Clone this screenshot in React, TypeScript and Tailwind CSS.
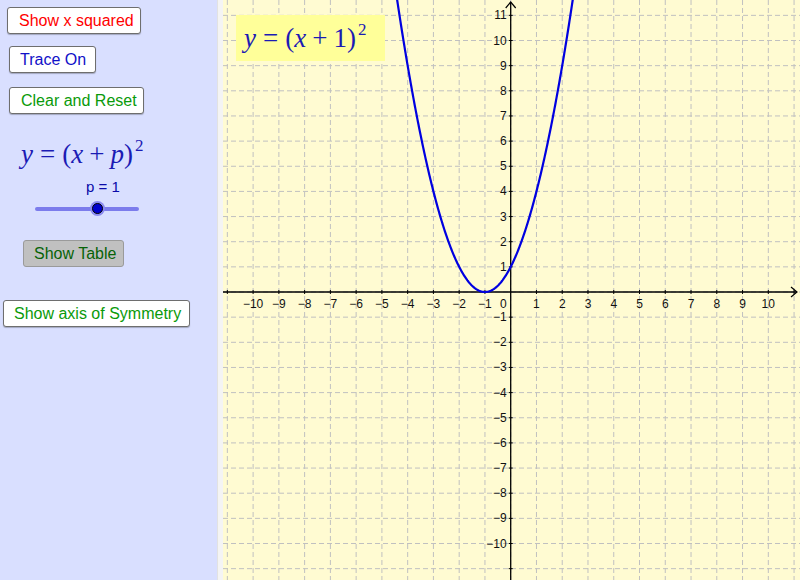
import React from 'react';

const OX = 287.7;
const OY = 292;
const UX = 25.76;
const UY = 25.15;
const GRID = Array.from({ length: 23 }, (_, i) => i - 11);

const px = (x: number) => OX + x * UX;
const py = (y: number) => OY - y * UY;

function parabola() {
  const pts: string[] = [];
  for (let x = -4.6; x <= 2.6; x += 0.02) {
    const y = (x + 1) * (x + 1);
    pts.push(`${px(x).toFixed(2)},${py(y).toFixed(2)}`);
  }
  return 'M' + pts.join(' L');
}

const minus = (n: number) => (n < 0 ? `\u2212${-n}` : `${n}`);

function Btn({ children, className }: { children: React.ReactNode; className: string }) {
  return (
    <button
      className={`flex h-[27px] items-center rounded-[3px] border border-[#6e6e6e] bg-white text-[16px] leading-none shadow-[0_1px_1px_rgba(0,0,0,0.25)] ${className}`}
      style={{ fontFamily: '"Liberation Sans", Arial, sans-serif' }}
    >
      {children}
    </button>
  );
}

function Formula({ v }: { v: string }) {
  return (
    <span className="whitespace-nowrap text-[27px] leading-none text-[#1b1bb4]" style={{ fontFamily: '"Liberation Serif", "Times New Roman", serif' }}>
      <i>y</i>
      <span className="mx-[7px]">=</span>
      (<i>x</i>
      <span className="mx-[6px]">+</span>
      {v === 'p' ? <i>p</i> : v})
      <sup className="top-[-12px] ml-[2px] text-[17px]">2</sup>
    </span>
  );
}

function Graph() {
  return (
    <svg width="577" height="580" className="block">
      <rect width="577" height="580" fill="#fffbd2" />
      {GRID.map(k => (
        <line key={'v' + k} x1={px(k)} y1={0} x2={px(k)} y2={580} stroke="#c0c0c0" strokeWidth="1" strokeDasharray="5 3" />
      ))}
      {GRID.map(k => (
        <line key={'h' + k} x1={0} y1={py(k)} x2={577} y2={py(k)} stroke="#c0c0c0" strokeWidth="1" strokeDasharray="5 3" />
      ))}
      {/* axes */}
      <line x1={0} y1={OY} x2={574} y2={OY} stroke="#000" strokeWidth="1.3" />
      <line x1={OX} y1={2} x2={OX} y2={580} stroke="#000" strokeWidth="1.3" />
      <path d={`M${568},${OY - 5} L${574},${OY} L${568},${OY + 5}`} fill="none" stroke="#000" strokeWidth="1.2" />
      <path d={`M${OX - 5},8 L${OX},2 L${OX + 5},8`} fill="none" stroke="#000" strokeWidth="1.2" />
      {GRID.filter(k => k !== 0).map(k => (
        <g key={'t' + k}>
          <line x1={px(k)} y1={OY - 2} x2={px(k)} y2={OY + 2} stroke="#000" strokeWidth="1" />
          <line x1={OX - 2} y1={py(k)} x2={OX + 2} y2={py(k)} stroke="#000" strokeWidth="1" />
        </g>
      ))}
      <g fontFamily='"Liberation Sans", Arial, sans-serif' fontSize="12" fill="#111">
        {GRID.filter(k => k !== 0 && Math.abs(k) <= 10).map(k => (
          <text key={'xl' + k} x={px(k)} y={OY + 16} textAnchor="middle">{minus(k)}</text>
        ))}
        {GRID.filter(k => k !== 0 && py(k) < 560 && py(k) > 8).map(k => (
          <text key={'yl' + k} x={OX - 4} y={py(k) + 4} textAnchor="end">{minus(k)}</text>
        ))}
        <text x={OX - 4} y={OY + 16} textAnchor="end">0</text>
      </g>
      <path d={parabola()} fill="none" stroke="#0000e0" strokeWidth="2.2" />
    </svg>
  );
}

export default function App() {
  return (
    <div className="flex h-[580px] w-[800px] overflow-hidden bg-white">
      <div className="flex w-[217px] shrink-0 flex-col items-start bg-[#d9dfff]">
        <Btn className="ml-[7px] mt-[7px] w-[134px] pl-[11px] text-[#ff0000]">Show x squared</Btn>
        <Btn className="ml-[9px] mt-[12px] w-[87px] pl-[10px] text-[#1010c8]">Trace On</Btn>
        <Btn className="ml-[9px] mt-[14px] w-[135px] pl-[11px] text-[#0a9a0a]">Clear and Reset</Btn>
        <div className="ml-[21px] mt-[24px] flex h-[30px] items-end">
          <Formula v="p" />
        </div>
        <div
          className="ml-[86px] mt-[11px] text-[15px] leading-none text-[#0a0aa8]"
          style={{ fontFamily: '"Liberation Sans", Arial, sans-serif' }}
        >
          p = 1
        </div>
        <div className="relative ml-[35px] mt-[13px] h-[4px] w-[104px] rounded-full bg-[#7c7cec]">
          <div className="absolute left-[55px] top-[-6px] flex h-[15px] w-[15px] items-center justify-center rounded-full bg-[#8a8af0]">
            <div className="h-[11px] w-[11px] rounded-full border border-black bg-[#0000cc]" />
          </div>
        </div>
        <button
          className="ml-[23px] mt-[29px] flex h-[27px] w-[101px] items-center rounded-[3px] border border-[#9a9a9a] bg-[#c0c0c0] pl-[10px] text-[16px] leading-none text-[#076307]"
          style={{ fontFamily: '"Liberation Sans", Arial, sans-serif' }}
        >
          Show Table
        </button>
        <Btn className="ml-[3px] mt-[33px] w-[187px] pl-[10px] text-[#0a9a0a]">Show axis of Symmetry</Btn>
      </div>
      <div className="w-[6px] shrink-0 border-l border-[#e2e2e2] bg-[#f4f4f4]" />
      <div className="relative flex-1">
        <Graph />
        <div className="absolute left-[13px] top-[15px] flex h-[46px] w-[149px] items-center bg-[#ffff99] pl-[8px]">
          <Formula v="1" />
        </div>
      </div>
    </div>
  );
}
